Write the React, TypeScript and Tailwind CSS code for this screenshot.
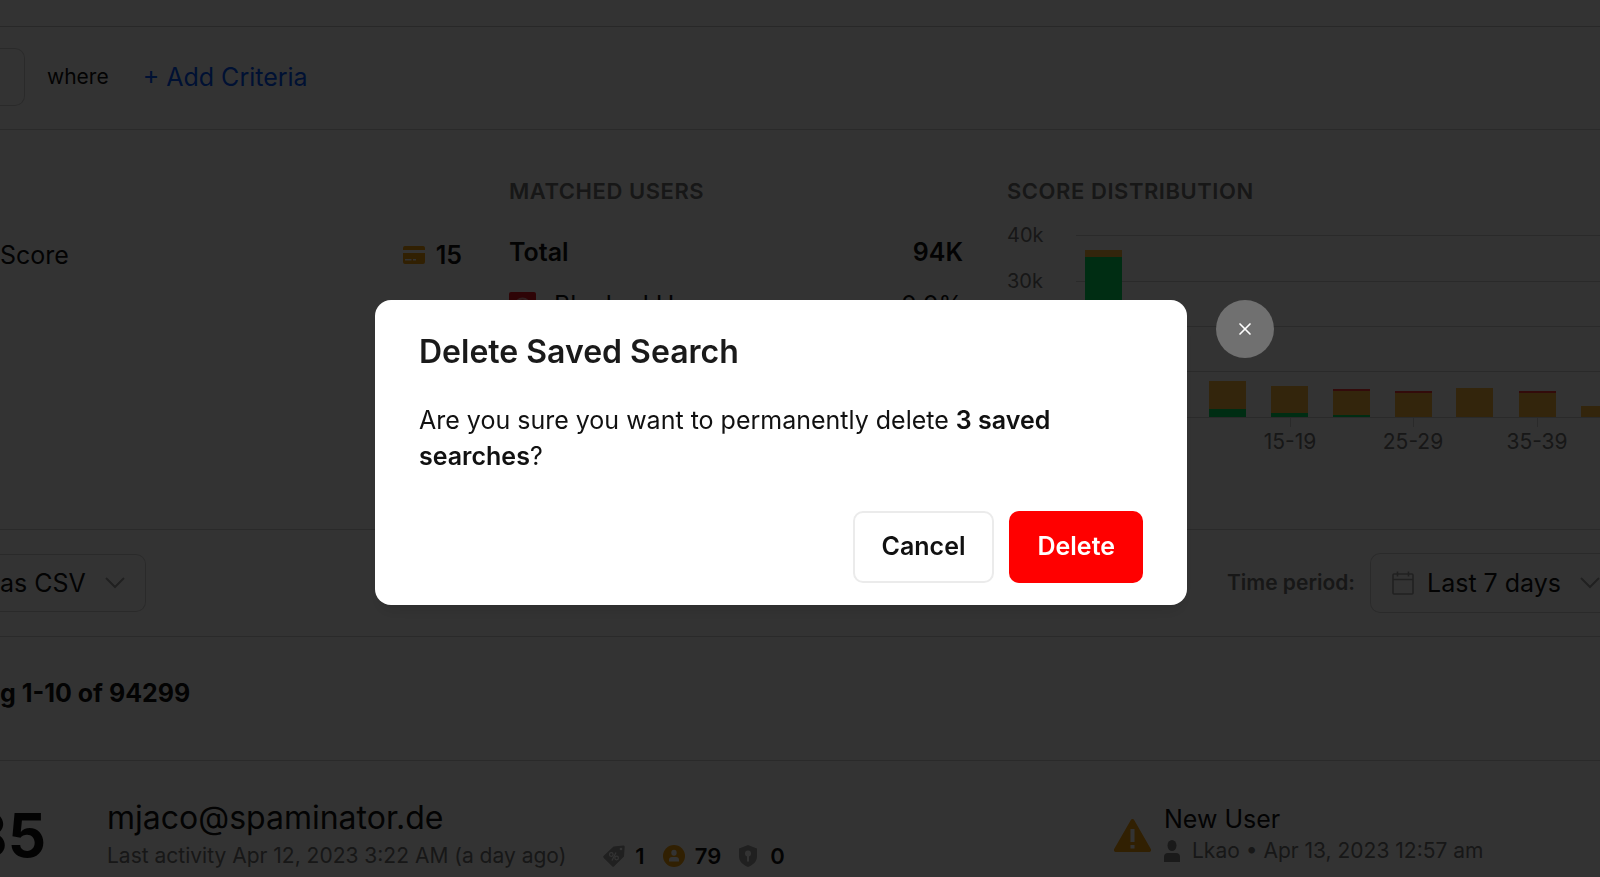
import React from "react";
import { X } from "lucide-react";

interface Bar {
    x: number;
    red?: number;
    orange: number;
    green?: number;
}

// Bar segments in units of pixels above the zero line
const bars: Bar[] = [
    { x: 78, orange: 7, green: 160 },
    { x: 202, orange: 28, green: 8 },
    { x: 264, orange: 27, green: 4 },
    { x: 326, red: 2, orange: 24, green: 2 },
    { x: 388, red: 2, orange: 24 },
    { x: 449, orange: 29 },
    { x: 512, red: 2, orange: 24 },
    { x: 574, orange: 11 },
];

const yTicks = [
    { label: "40k", y: 15 },
    { label: "30k", y: 61 },
    { label: "20k", y: 106 },
    { label: "10k", y: 151 },
    { label: "0", y: 197 },
];

const xTicks = [
    { label: "5-9", x: 159 },
    { label: "15-19", x: 283 },
    { label: "25-29", x: 406 },
    { label: "35-39", x: 530 },
];

function ScoreChart() {
    return (
        <svg
            width="593"
            height="240"
            viewBox="0 0 593 240"
            role="img"
            aria-label="Score distribution"
            className="block"
        >
            {yTicks.map((tick) => (
                <g key={tick.label}>
                    <text x="0" y={tick.y + 7} className="fill-[#737373] text-[20px]">
                        {tick.label}
                    </text>
                    <rect x="69" y={tick.y} width="524" height="1" className="fill-[#d2d2d2]" />
                </g>
            ))}
            {bars.map(({ x, red = 0, orange, green = 0 }) => (
                <g key={x}>
                    <rect x={x} y={197 - green} width="37" height={green} fill="#00e060" />
                    <rect x={x} y={197 - green - orange} width="37" height={orange} fill="#ffb93c" />
                    <rect x={x} y={197 - green - orange - red} width="37" height={red} fill="#ff3b3b" />
                </g>
            ))}
            {xTicks.map((tick) => (
                <g key={tick.label}>
                    <rect x={tick.x} y="197" width="1" height="10" className="fill-[#d2d2d2]" />
                    <text
                        x={tick.x}
                        y="229"
                        textAnchor="middle"
                        className="fill-[#737373] text-[21px]"
                    >
                        {tick.label}
                    </text>
                </g>
            ))}
        </svg>
    );
}

function Chevron() {
    return (
        <svg width="20" height="12" viewBox="0 0 20 12" fill="none" className="shrink-0">
            <path d="M1 1l9 9 9-9" stroke="#a0a0a0" strokeWidth="2" />
        </svg>
    );
}

function CardIcon() {
    return (
        <svg width="22" height="18" viewBox="0 0 22 18">
            <path
                fill="#f59e0b"
                fillRule="evenodd"
                d="M2 0h18a2 2 0 0 1 2 2v2H0V2a2 2 0 0 1 2-2ZM0 7h22v9a2 2 0 0 1-2 2H2a2 2 0 0 1-2-2V7Zm2 6v1.500h6.500V13H2Zm8 0v1.500h3V13h-3Z"
            />
        </svg>
    );
}

function BlockedIcon() {
    return (
        <svg width="27" height="27" viewBox="0 0 27 27">
            <rect width="27" height="27" rx="2" fill="#e5141e" />
            <circle cx="13.500" cy="13.500" r="7" fill="none" stroke="#f5a0a0" strokeWidth="2" />
            <path d="M8.500 18.500l10-10" stroke="#f5a0a0" strokeWidth="2" />
        </svg>
    );
}

function CalendarIcon() {
    return (
        <svg width="22" height="24" viewBox="0 0 22 24" fill="none" stroke="#a0a0a0" strokeWidth="1.600">
            <rect x="1" y="3" width="20" height="20" rx="1" />
            <path d="M1 8.500h20M5.500 0.500v5M16.500 0.500v5" />
        </svg>
    );
}

function TagIcon() {
    return (
        <svg width="22" height="22" viewBox="0 0 22 22">
            <path
                fill="#a0a0a0"
                d="M10.500 1.500L20 .5a1.500 1.500 0 0 1 1.700 1.700L21 11.500 11.200 21.300a1.500 1.500 0 0 1-2.100 0L.7 12.900a1.500 1.500 0 0 1 0-2.100Z"
            />
            <circle cx="18" cy="4" r="1.300" fill="#fff" />
            <g fill="none" stroke="#fff" strokeWidth="1.200">
                <circle cx="8.300" cy="9.500" r="1.800" />
                <circle cx="13.600" cy="13" r="1.800" />
                <path d="M13 7.500l-4 8" />
            </g>
        </svg>
    );
}

function AccountIcon() {
    return (
        <svg width="22" height="22" viewBox="0 0 22 22">
            <circle cx="11" cy="11" r="11" fill="#f59e0b" />
            <ellipse cx="11" cy="7.800" rx="2.700" ry="3" fill="#fff" />
            <path d="M6 16.500v-1.500a3 3 0 0 1 3-3h4a3 3 0 0 1 3 3v1.500Z" fill="#fff" />
        </svg>
    );
}

function ShieldIcon() {
    return (
        <svg width="18" height="22" viewBox="0 0 18 22">
            <path d="M9 0l9 3.500v8c0 5-4 8.500-9 10.500-5-2-9-5.500-9-10.500v-8Z" fill="#a0a0a0" />
            <circle cx="9" cy="8.500" r="3" fill="#fff" />
            <path d="M8 10h2v6.500H8Z" fill="#fff" />
        </svg>
    );
}

function WarningIcon() {
    return (
        <svg width="37" height="33" viewBox="0 0 37 33" className="shrink-0">
            <path
                fill="#f59e0b"
                d="M16.700 1.200a2 2 0 0 1 3.600 0l16.400 28.600a2 2 0 0 1-1.800 3.200H2.100a2 2 0 0 1-1.800-3.200Z"
            />
            <path d="M16.500 10h4v13h-4ZM16.500 26h4v3.500h-4Z" fill="#fff" />
        </svg>
    );
}

function PersonIcon() {
    return (
        <svg width="16" height="22" viewBox="0 0 16 22" fill="#808080">
            <ellipse cx="8" cy="5.500" rx="4.500" ry="5.500" />
            <path d="M0 22v-5a4 4 0 0 1 4-4h8a4 4 0 0 1 4 4v5Z" />
        </svg>
    );
}

function SearchPage() {
    return (
        <div className="min-h-screen overflow-hidden bg-white text-[25px] leading-8 whitespace-nowrap text-[#111111]">
            <header className="h-[27px] border-b border-[#c8c8c8]" />

            <section className="flex h-[103px] items-center border-b border-[#d2d2d2] pb-[2px]">
                <div className="h-[58px] w-[25px] rounded-r-[10px] border border-l-0 border-[#d2d2d2]" />
                <span className="ml-[22px] text-[21px]">where</span>
                <button className="ml-[34px] text-[#0055ff]">+ Add Criteria</button>
            </section>

            <section className="flex h-[400px] border-b border-[#d2d2d2] pt-[45px]">
                <div className="flex w-[462px] shrink-0 items-center justify-between self-start pt-[64px]">
                    <span>Score</span>
                    <span className="flex items-center gap-[11px] font-semibold">
                        <CardIcon />
                        15
                    </span>
                </div>

                <div className="ml-[47px] w-[454px] shrink-0">
                    <h2 className="text-[22px] font-semibold tracking-wide text-[#737373]">
                        MATCHED USERS
                    </h2>
                    <div className="mt-[29px] flex justify-between font-semibold">
                        <span>Total</span>
                        <span>94K</span>
                    </div>
                    <div className="mt-[21px] flex items-center">
                        <BlockedIcon />
                        <span className="ml-[18px] flex-1">Blocked Users</span>
                        <span>0.0%</span>
                    </div>
                </div>

                <div className="ml-11 min-w-0 flex-1">
                    <h2 className="text-[22px] font-semibold tracking-wide text-[#737373]">
                        SCORE DISTRIBUTION
                    </h2>
                    <div className="mt-[13px]">
                        <ScoreChart />
                    </div>
                </div>
            </section>

            <section className="flex h-[107px] items-center justify-between border-b border-[#d2d2d2]">
                <button className="flex h-[58px] items-center gap-[19px] rounded-r-[10px] border border-l-0 border-[#d2d2d2] pr-5">
                    as CSV
                    <Chevron />
                </button>
                <div className="flex items-center gap-[15px]">
                    <span className="text-[21px] font-semibold text-[#737373]">Time period:</span>
                    <button className="flex h-[60px] items-center rounded-l-[10px] border border-r-0 border-[#d2d2d2] pl-[21px]">
                        <CalendarIcon />
                        <span className="mr-[19px] ml-[13px]">Last 7 days</span>
                        <Chevron />
                    </button>
                </div>
            </section>

            <section className="flex h-[124px] items-center border-b border-[#d2d2d2]">
                <h1 className="pb-3 font-bold">g 1-10 of 94299</h1>
            </section>

            <section className="flex h-[115px] items-start pt-[39px]">
                <div className="flex w-[46px] shrink-0 justify-end overflow-hidden pt-[3px] text-[60px] leading-[64px] font-bold">
                    85
                </div>
                <div className="ml-[61px] flex-1">
                    <a href="#" className="block text-[32px] leading-9">
                        mjaco@spaminator.de
                    </a>
                    <div className="mt-1 flex items-center">
                        <span className="mr-[37px] text-[21px] text-[#737373]">
                            Last activity Apr 12, 2023 3:22 AM (a day ago)
                        </span>
                        <div className="flex items-center gap-[18px] text-[22px] font-semibold">
                            <span className="flex items-center gap-[10px]">
                                <TagIcon />1
                            </span>
                            <span className="flex items-center gap-[10px]">
                                <AccountIcon />
                                79
                            </span>
                            <span className="flex items-center gap-[13px]">
                                <ShieldIcon />0
                            </span>
                        </div>
                    </div>
                </div>
                <div className="flex w-[486px] shrink-0 items-center gap-[13px] pt-[3px]">
                    <WarningIcon />
                    <div>
                        <div>New User</div>
                        <div className="flex items-center gap-3 text-[21px] text-[#737373]">
                            <PersonIcon />
                            Lkao • Apr 13, 2023 12:57 am
                        </div>
                    </div>
                </div>
            </section>
        </div>
    );
}

function DeleteDialog() {
    return (
        <div className="fixed inset-0 flex items-center justify-center bg-black/80 pt-7 pr-[38px]">
            <div
                role="dialog"
                aria-labelledby="dialog-title"
                className="relative w-[812px] rounded-2xl bg-white px-11 pt-8 pb-[22px] shadow-lg"
            >
                <h2 id="dialog-title" className="text-[32px] leading-10 font-semibold text-[#1a1a1a]">
                    Delete Saved Search
                </h2>
                <p className="mt-[30px] text-[25px] leading-9 text-[#111111]">
                    Are you sure you want to permanently delete{" "}
                    <strong className="font-semibold">3 saved searches</strong>?
                </p>
                <div className="mt-[37px] flex justify-end gap-[15px] text-[25px] font-semibold">
                    <button className="h-[72px] rounded-[10px] border-2 border-[#ebebeb] px-[27px] text-[#111111]">
                        Cancel
                    </button>
                    <button className="h-[72px] rounded-[10px] bg-[#ff0000] px-7 text-white">
                        Delete
                    </button>
                </div>
                <button
                    aria-label="Close"
                    className="absolute top-0 left-full ml-[29px] flex size-[58px] items-center justify-center rounded-full bg-[#707070] text-white"
                >
                    <X size={20} strokeWidth={2} />
                </button>
            </div>
        </div>
    );
}

export default function App() {
    return (
        <div className="font-['Inter',sans-serif]">
            <SearchPage />
            <DeleteDialog />
        </div>
    );
}
